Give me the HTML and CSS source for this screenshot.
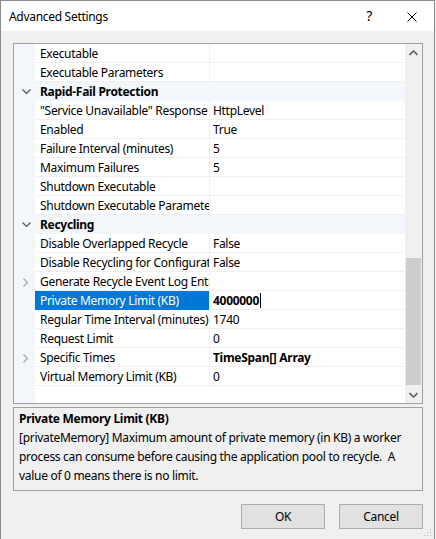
FILE: index.html
```html
<!DOCTYPE html>
<html>
<head>
<meta charset="utf-8">
<link rel="stylesheet" href="styles.css">
</head>
<body>
<div class="window">
  <div class="titlebar">
    <span class="title">Advanced Settings</span>
    <span class="help">?</span>
    <svg class="close" width="10" height="10" viewBox="0 0 10 10"><path d="M0.5 0.5L9.5 9.5M9.5 0.5L0.5 9.5" stroke="#000" stroke-width="1" fill="none"/></svg>
  </div>
  <div class="content">
    <div class="grid">
      <div class="rows">
        <div class="row"><span class="m"></span><span class="n">Executable</span><span class="v"></span></div>
        <div class="row"><span class="m"></span><span class="n">Executable Parameters</span><span class="v"></span></div>
        <div class="row cat"><span class="m"><svg width="9" height="6" viewBox="0 0 9 6"><path d="M0.5 0.5L4.5 4.5L8.5 0.5" stroke="#555" stroke-width="1.2" fill="none"/></svg></span><span class="n">Rapid-Fail Protection</span></div>
        <div class="row"><span class="m"></span><span class="n">"Service Unavailable" Response Type</span><span class="v">HttpLevel</span></div>
        <div class="row"><span class="m"></span><span class="n">Enabled</span><span class="v">True</span></div>
        <div class="row"><span class="m"></span><span class="n">Failure Interval (minutes)</span><span class="v">5</span></div>
        <div class="row"><span class="m"></span><span class="n">Maximum Failures</span><span class="v">5</span></div>
        <div class="row"><span class="m"></span><span class="n">Shutdown Executable</span><span class="v"></span></div>
        <div class="row"><span class="m"></span><span class="n">Shutdown Executable Parameters</span><span class="v"></span></div>
        <div class="row cat"><span class="m"><svg width="9" height="6" viewBox="0 0 9 6"><path d="M0.5 0.5L4.5 4.5L8.5 0.5" stroke="#555" stroke-width="1.2" fill="none"/></svg></span><span class="n">Recycling</span></div>
        <div class="row"><span class="m"></span><span class="n">Disable Overlapped Recycle</span><span class="v">False</span></div>
        <div class="row"><span class="m"></span><span class="n">Disable Recycling for Configuration Changes</span><span class="v">False</span></div>
        <div class="row"><span class="m"><svg width="6" height="9" viewBox="0 0 6 9"><path d="M0.5 0.5L4.5 4.5L0.5 8.5" stroke="#a6a6a6" stroke-width="1.2" fill="none"/></svg></span><span class="n">Generate Recycle Event Log Entry</span><span class="v"></span></div>
        <div class="row sel"><span class="m"></span><span class="n">Private Memory Limit (KB)</span><span class="v"><b>4000000</b><span class="caret"></span></span></div>
        <div class="row"><span class="m"></span><span class="n">Regular Time Interval (minutes)</span><span class="v">1740</span></div>
        <div class="row"><span class="m"></span><span class="n">Request Limit</span><span class="v">0</span></div>
        <div class="row"><span class="m"><svg width="6" height="9" viewBox="0 0 6 9"><path d="M0.5 0.5L4.5 4.5L0.5 8.5" stroke="#a6a6a6" stroke-width="1.2" fill="none"/></svg></span><span class="n">Specific Times</span><span class="v"><b>TimeSpan[] Array</b></span></div>
        <div class="row"><span class="m"></span><span class="n">Virtual Memory Limit (KB)</span><span class="v">0</span></div>
      </div>
      <div class="scrollbar">
        <div class="arrow"><svg width="9" height="6" viewBox="0 0 9 6"><path d="M0.5 5L4.5 1L8.5 5" stroke="#606060" stroke-width="1.6" fill="none"/></svg></div>
        <div class="track"><div class="thumb"></div></div>
        <div class="arrow"><svg width="9" height="6" viewBox="0 0 9 6"><path d="M0.5 1L4.5 5L8.5 1" stroke="#606060" stroke-width="1.6" fill="none"/></svg></div>
      </div>
    </div>
    <div class="desc">
      <div class="desc-title">Private Memory Limit (KB)</div>
      <div class="desc-text">[privateMemory] Maximum amount of private memory (in KB) a worker<br>process can consume before causing the application pool to recycle.&nbsp; A<br>value of 0 means there is no limit.</div>
    </div>
    <div class="buttons">
      <button class="btn">OK</button>
      <button class="btn">Cancel</button>
    </div>
  </div>
  <svg class="grip" width="8" height="8" viewBox="0 0 8 8"><g fill="#b8b8b8"><rect x="6" y="0" width="1" height="1"/><rect x="3" y="3" width="1" height="1"/><rect x="6" y="3" width="1" height="1"/><rect x="0" y="6" width="1" height="1"/><rect x="3" y="6" width="1" height="1"/><rect x="6" y="6" width="1" height="1"/></g></svg>
</div>
</body>
</html>
```

FILE: styles.css
```css
html, body {
  margin: 0;
  padding: 0;
  background: #f0f0f0;
}
body {
  font-family: "Noto Sans", "Open Sans", sans-serif;
  font-size: 12px;
  letter-spacing: -0.3px;
  color: #000;
}
.window {
  position: relative;
  width: 435px;
  height: 539px;
  box-sizing: border-box;
  border: 1px solid #8c8c8c;
  border-bottom: none;
  background: #f0f0f0;
  display: flex;
  flex-direction: column;
}
.titlebar {
  height: 30px;
  background: #fff;
  display: flex;
  align-items: center;
  flex-shrink: 0;
}
.title {
  padding-left: 8px;
  flex: 1;
  font-size: 12px;
}
.help {
  font-size: 14px;
  margin-right: 35px;
  margin-top: -1px;
}
.close {
  margin-right: 17px;
  margin-top: 1px;
}
.content {
  padding: 12px 11px 0 12px;
  display: flex;
  flex-direction: column;
}
.grid {
  height: 361px;
  box-sizing: border-box;
  border: 1px solid #a0a0a0;
  background: #fff;
  display: flex;
}
.rows {
  width: 391px;
  background: linear-gradient(to right, #f3f6fb 21px, #fff 21px);
}
.row {
  display: grid;
  grid-template-columns: 21px 174px 196px;
  height: 19px;
}
.row > span {
  white-space: nowrap;
  overflow: hidden;
  text-overflow: clip;
  box-sizing: border-box;
  padding-top: 1px;
  line-height: 18px;
}
.m {
  display: flex;
  align-items: center;
  justify-content: center;
  padding-left: 3px;
}
.n {
  padding-left: 5px;
  border-bottom: 1px solid #f0f0f0;
}
.v {
  padding-left: 3px;
  border-left: 1px solid #f0f0f0;
  border-bottom: 1px solid #f0f0f0;
}
.cat {
  background: #f3f6fb;
}
.cat .n {
  grid-column: 2 / 4;
  font-weight: bold;
  border-bottom: 1px solid #f3f6fb;
}
.sel .n {
  background: #0078d7;
  color: #fff;
  border-bottom-color: #0078d7;
}
.caret {
  display: inline-block;
  width: 1px;
  height: 15px;
  background: #000;
  vertical-align: middle;
  margin-left: 1px;
  margin-top: -2px;
}
.scrollbar {
  width: 17px;
  background: #f0f0f0;
  display: flex;
  flex-direction: column;
}
.arrow {
  height: 17px;
  display: flex;
  align-items: center;
  justify-content: center;
}
.track {
  flex: 1;
}
.thumb {
  margin: 197px 1px 0 1px;
  height: 127px;
  background: #cdcdcd;
}
.desc {
  margin-top: 3px;
  height: 84px;
  box-sizing: border-box;
  border: 1px solid #a0a0a0;
  padding: 1px 5px 0 5px;
  line-height: 19px;
}
.desc-title {
  font-weight: bold;
}
.desc-text {
  white-space: nowrap;
}
.buttons {
  display: flex;
  justify-content: flex-end;
  gap: 14px;
  margin-top: 13px;
}
.btn {
  width: 84px;
  height: 25px;
  box-sizing: border-box;
  border: 1px solid #adadad;
  background: #e1e1e1;
  font-family: inherit;
  font-size: 12px;
  letter-spacing: -0.3px;
  color: #000;
  padding: 0;
}
.grip {
  position: absolute;
  right: 2px;
  bottom: 2px;
}
```
